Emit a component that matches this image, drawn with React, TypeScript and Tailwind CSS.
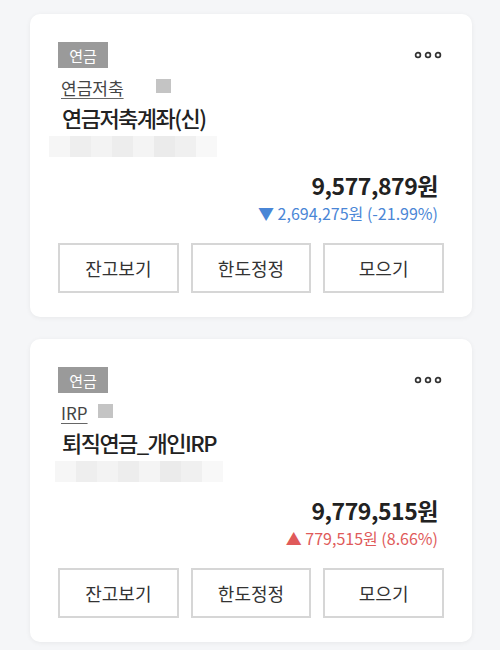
type Account = {
  category: string;
  product: string;
  name: string;
  squareGap: number;
  blurOffset: number;
  amount: string;
  change: string;
  up: boolean;
};

const accounts: Account[] = [
  {
    category: '연금',
    product: '연금저축',
    name: '연금저축계좌(신)',
    squareGap: 32,
    blurOffset: -9,
    amount: '9,577,879원',
    change: '▼ 2,694,275원 (-21.99%)',
    up: false,
  },
  {
    category: '연금',
    product: 'IRP',
    name: '퇴직연금_개인IRP',
    squareGap: 10,
    blurOffset: -3,
    amount: '9,779,515원',
    change: '▲ 779,515원 (8.66%)',
    up: true,
  },
];

// masked account number, drawn as a soft mosaic
const mosaic = ['#f6f6f6', '#eeeeee', '#f3f3f3', '#ededed', '#f4f4f4', '#ebebeb', '#f0f0f0', '#f8f8f8'];

function MoreDots() {
  return (
    <svg width="30" height="10" viewBox="0 0 30 10" className="mt-[8px]">
      {[4, 14, 24].map((cx) => (
        <circle key={cx} cx={cx} cy="5" r="2.4" fill="none" stroke="#333" strokeWidth="1.7" />
      ))}
    </svg>
  );
}

function AccountCard({ a }: { a: Account }) {
  return (
    <div className="bg-white rounded-[10px] shadow-[0_1px_5px_rgba(0,0,0,0.06)] pt-[28px] pb-[24px] px-[28px]">
      <div className="flex justify-between items-start">
        <div className="h-[26px] w-[50px] bg-[#9a9a9a] text-white text-[15px] flex items-center justify-center leading-none">
          {a.category}
        </div>
        <MoreDots />
      </div>

      <div className="mt-[4px] h-[30px] flex items-center pl-[3px]">
        <span className="text-[17px] text-[#444] underline underline-offset-[3px] decoration-[#666] leading-none">
          {a.product}
        </span>
        <span className="w-[15px] h-[14px] bg-[#c4c4c4] -mt-[2px]" style={{ marginLeft: a.squareGap }} />
      </div>

      <div className="h-[30px] flex items-center pl-[4px] text-[22px] font-medium text-[#222] tracking-[-0.07em] leading-none">
        {a.name}
      </div>

      <div className="mt-[4px] flex h-[21px]" style={{ marginLeft: a.blurOffset }}>
        {mosaic.map((c, i) => (
          <div key={i} className="w-[21px] h-[21px]" style={{ backgroundColor: c }} />
        ))}
      </div>

      <div className="mt-[13px] h-[30px] flex items-center justify-end pr-[6px] text-[23px] font-bold text-[#222] tracking-[-0.02em] leading-none">
        {a.amount}
      </div>
      <div
        className={`mt-[2px] h-[22px] flex items-center justify-end pr-[6px] text-[16px] leading-none ${
          a.up ? 'text-[#e05a5a]' : 'text-[#4a86d6]'
        }`}
      >
        {a.change}
      </div>

      <div className="mt-[19px] grid grid-cols-3 gap-[12px]">
        {['잔고보기', '한도정정', '모으기'].map((label) => (
          <button
            key={label}
            className="h-[50px] border-2 border-[#d6d6d6] bg-white text-[18px] text-[#333]"
          >
            {label}
          </button>
        ))}
      </div>
    </div>
  );
}

export default function App() {
  return (
    <div
      className="min-h-[650px] bg-[#f5f6f8] pt-[14px] px-[30px] pb-[8px] flex flex-col gap-[22px] w-[502px]"
      style={{ fontFamily: '"Noto Sans CJK KR", "Noto Sans", sans-serif' }}
    >
      {accounts.map((a) => (
        <AccountCard key={a.name} a={a} />
      ))}
    </div>
  );
}
